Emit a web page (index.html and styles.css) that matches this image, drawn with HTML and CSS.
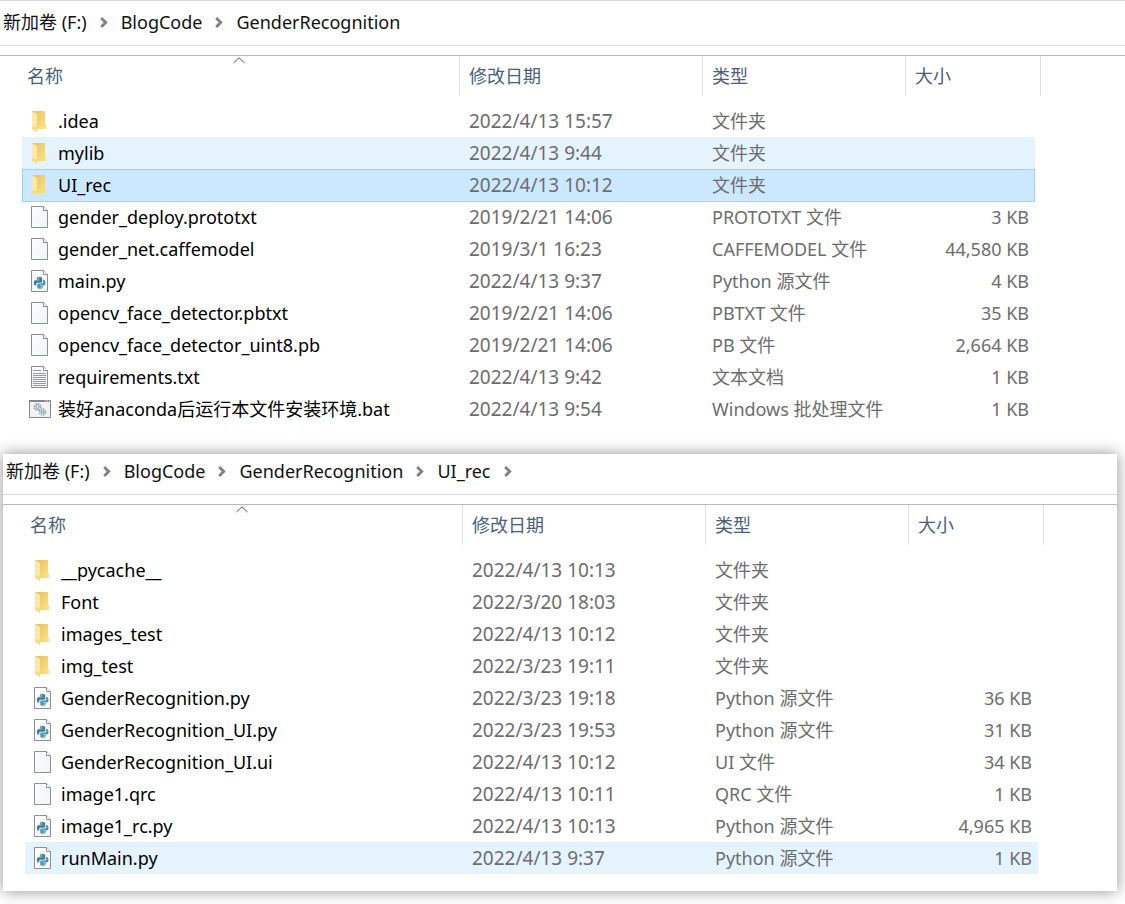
FILE: index.html
```
<!DOCTYPE html>
<html lang="zh-CN">
<head>
<meta charset="utf-8">
<title>GenderRecognition</title>
<link rel="stylesheet" href="styles.css">
</head>
<body>
<svg class="sprite" aria-hidden="true">
  <defs>
    <linearGradient id="gold" x1="0" y1="0" x2="1" y2="1">
      <stop offset="0" stop-color="#e9c25a"/><stop offset="1" stop-color="#ffe08a"/>
    </linearGradient>
    <linearGradient id="paper" x1="0" y1="0" x2="1" y2="1">
      <stop offset="0" stop-color="#fdfdfe"/><stop offset="1" stop-color="#f1f4f6"/>
    </linearGradient>
    <symbol id="folder" viewBox="0 0 24 24">
      <path d="M4 2H17V15L18 16V20H8V18H4Z" fill="url(#gold)"/>
      <path d="M4 2L9 5V23L4 20Z" fill="#ffe9a6"/>
      <path d="M4 17L9 18V23L4 20Z" fill="#fbdc80"/>
    </symbol>
    <symbol id="doc" viewBox="0 0 24 24">
      <path d="M3.500 1.500H15.500L19.500 5.500V22.500H3.500Z" fill="url(#paper)" stroke="#8f8f8f"/>
      <path d="M15.500 1.500V5.500H19.500" fill="#fff" stroke="#8f8f8f"/>
    </symbol>
    <symbol id="python" viewBox="0 0 24 24">
      <use href="#doc"/>
      <g transform="translate(0 .8)">
      <path d="M8.800 8.500Q8.800 7.200 11.500 7.200T14.200 8.500V11.500Q14.200 13 12.500 13H9.500Q8.200 13 8.200 14.200V15.700H7.300Q5.800 15.700 5.800 13T7.300 10.400H11.500V10H8.800Z" fill="#3d7f9e"/>
      <path d="M15 10.300H16Q17.500 10.300 17.500 13T16 15.700H12V16.100H14.700V17.600Q14.700 18.900 12 18.900T9.200 17.600V14.900Q9.200 13.700 10.600 13.700H13.600Q15 13.700 15 12.400Z" fill="#5196b3"/>
      <circle cx="10.300" cy="8.700" r=".5" fill="#fff"/><circle cx="13.200" cy="17.400" r=".5" fill="#fff"/>
      </g>
    </symbol>
    <symbol id="text" viewBox="0 0 24 24">
      <use href="#doc"/>
      <path d="M5 5.500H13M5 8.500H18M5 10.500H18M5 12.500H18M5 14.500H18M5 16.500H18M5 18.500H18M5 20.500H18" stroke="#999"/>
    </symbol>
    <symbol id="batch" viewBox="0 0 24 24">
      <path d="M1.500 3.500H22.500V20.500H1.500Z" fill="#f3f3f3" stroke="#858585"/>
      <path d="M1 3H23V5H1Z" fill="#858585"/>
      <path d="M17 4H18M19 4H20M21 4H22" stroke="#eee"/>
      <circle cx="9.500" cy="10" r="3.200" fill="#e4e9ed" stroke="#91a0ac" stroke-width="1.800" stroke-dasharray="1.500 1"/>
      <circle cx="9.500" cy="10" r="1.500" fill="#fff" stroke="#8796a2"/>
      <circle cx="14.500" cy="15" r="3" fill="#d6e4ee" stroke="#91a8b8" stroke-width="1.600" stroke-dasharray="1.400 1"/>
      <circle cx="14.500" cy="15" r="1.300" fill="#fff" stroke="#8796a2"/>
    </symbol>
    <symbol id="chevron" viewBox="0 0 8 12">
      <path d="M1.200 2L5.700 6.500L1.200 11" fill="none" stroke="#808080" stroke-width="2.800"/>
    </symbol>
    <symbol id="sort" viewBox="0 0 12 7">
      <path d="M.5 6L6 .8L11.500 6" fill="none" stroke="#555"/>
    </symbol>
  </defs>
</svg>

<main>
<section class="pane pane-main">
  <nav class="crumbs" aria-label="路径">
    <a href="#">新加卷 (F:)</a><svg class="chevron"><use href="#chevron"/></svg>
    <a href="#">BlogCode</a><svg class="chevron"><use href="#chevron"/></svg>
    <a href="#">GenderRecognition</a>
  </nav>
  <div class="listing">
    <table class="files">
      <colgroup><col><col class="col-date"><col class="col-type"><col class="col-size"><col class="col-tail"></colgroup>
      <thead><tr>
        <th><button class="head head-name">名称<svg class="sort"><use href="#sort"/></svg></button></th>
        <th><button class="head">修改日期</button></th>
        <th><button class="head">类型</button></th>
        <th colspan="2"><button class="head">大小</button></th>
      </tr></thead>
      <tbody>
        <tr><td><div class="name"><svg class="icon"><use href="#folder"/></svg>.idea</div></td><td class="date">2022/4/13 15:57</td><td>文件夹</td><td></td></tr>
        <tr class="hover"><td><div class="name"><svg class="icon"><use href="#folder"/></svg>mylib</div></td><td class="date">2022/4/13 9:44</td><td>文件夹</td><td></td></tr>
        <tr class="selected"><td><div class="name"><svg class="icon"><use href="#folder"/></svg>UI_rec</div></td><td class="date">2022/4/13 10:12</td><td>文件夹</td><td></td></tr>
        <tr><td><div class="name"><svg class="icon"><use href="#doc"/></svg>gender_deploy.prototxt</div></td><td class="date">2019/2/21 14:06</td><td>PROTOTXT 文件</td><td>3 KB</td></tr>
        <tr><td><div class="name"><svg class="icon"><use href="#doc"/></svg>gender_net.caffemodel</div></td><td class="date">2019/3/1 16:23</td><td>CAFFEMODEL 文件</td><td>44,580 KB</td></tr>
        <tr><td><div class="name"><svg class="icon"><use href="#python"/></svg>main.py</div></td><td class="date">2022/4/13 9:37</td><td>Python 源文件</td><td>4 KB</td></tr>
        <tr><td><div class="name"><svg class="icon"><use href="#doc"/></svg>opencv_face_detector.pbtxt</div></td><td class="date">2019/2/21 14:06</td><td>PBTXT 文件</td><td>35 KB</td></tr>
        <tr><td><div class="name"><svg class="icon"><use href="#doc"/></svg>opencv_face_detector_uint8.pb</div></td><td class="date">2019/2/21 14:06</td><td>PB 文件</td><td>2,664 KB</td></tr>
        <tr><td><div class="name"><svg class="icon"><use href="#text"/></svg>requirements.txt</div></td><td class="date">2022/4/13 9:42</td><td>文本文档</td><td>1 KB</td></tr>
        <tr><td><div class="name"><svg class="icon"><use href="#batch"/></svg>装好anaconda后运行本文件安装环境.bat</div></td><td class="date">2022/4/13 9:54</td><td>Windows 批处理文件</td><td>1 KB</td></tr>
      </tbody>
    </table>
  </div>
</section>

<section class="pane pane-raised">
  <nav class="crumbs" aria-label="路径">
    <a href="#">新加卷 (F:)</a><svg class="chevron"><use href="#chevron"/></svg>
    <a href="#">BlogCode</a><svg class="chevron"><use href="#chevron"/></svg>
    <a href="#">GenderRecognition</a><svg class="chevron"><use href="#chevron"/></svg>
    <a href="#">UI_rec</a><svg class="chevron"><use href="#chevron"/></svg>
  </nav>
  <div class="listing">
    <table class="files">
      <colgroup><col><col class="col-date"><col class="col-type"><col class="col-size"><col class="col-tail"></colgroup>
      <thead><tr>
        <th><button class="head head-name">名称<svg class="sort"><use href="#sort"/></svg></button></th>
        <th><button class="head">修改日期</button></th>
        <th><button class="head">类型</button></th>
        <th colspan="2"><button class="head">大小</button></th>
      </tr></thead>
      <tbody>
        <tr><td><div class="name"><svg class="icon"><use href="#folder"/></svg>__pycache__</div></td><td class="date">2022/4/13 10:13</td><td>文件夹</td><td></td></tr>
        <tr><td><div class="name"><svg class="icon"><use href="#folder"/></svg>Font</div></td><td class="date">2022/3/20 18:03</td><td>文件夹</td><td></td></tr>
        <tr><td><div class="name"><svg class="icon"><use href="#folder"/></svg>images_test</div></td><td class="date">2022/4/13 10:12</td><td>文件夹</td><td></td></tr>
        <tr><td><div class="name"><svg class="icon"><use href="#folder"/></svg>img_test</div></td><td class="date">2022/3/23 19:11</td><td>文件夹</td><td></td></tr>
        <tr><td><div class="name"><svg class="icon"><use href="#python"/></svg>GenderRecognition.py</div></td><td class="date">2022/3/23 19:18</td><td>Python 源文件</td><td>36 KB</td></tr>
        <tr><td><div class="name"><svg class="icon"><use href="#python"/></svg>GenderRecognition_UI.py</div></td><td class="date">2022/3/23 19:53</td><td>Python 源文件</td><td>31 KB</td></tr>
        <tr><td><div class="name"><svg class="icon"><use href="#doc"/></svg>GenderRecognition_UI.ui</div></td><td class="date">2022/4/13 10:12</td><td>UI 文件</td><td>34 KB</td></tr>
        <tr><td><div class="name"><svg class="icon"><use href="#doc"/></svg>image1.qrc</div></td><td class="date">2022/4/13 10:11</td><td>QRC 文件</td><td>1 KB</td></tr>
        <tr><td><div class="name"><svg class="icon"><use href="#python"/></svg>image1_rc.py</div></td><td class="date">2022/4/13 10:13</td><td>Python 源文件</td><td>4,965 KB</td></tr>
        <tr class="hover"><td><div class="name"><svg class="icon"><use href="#python"/></svg>runMain.py</div></td><td class="date">2022/4/13 9:37</td><td>Python 源文件</td><td>1 KB</td></tr>
      </tbody>
    </table>
  </div>
</section>
</main>
</body>
</html>
```
FILE: styles.css
```
* { box-sizing: border-box; }

body {
  margin: 0;
  background: #fff;
  color: #000;
  font: 18px/32px "Noto Sans", "Noto Sans CJK SC", sans-serif;
}

.sprite { position: absolute; width: 0; height: 0; }

.pane { background: #fff; }
.pane-main { border-top: 1px solid #d9d9d9; }
.pane-main .crumbs { padding-top: 4px; }
.pane-main .listing { padding-right: 84px; }
.pane-raised {
  margin: 29px 8px 13px 3px;
  padding-bottom: 17px;
  box-shadow: 0 0 14px rgba(0, 0, 0, .45);
}
.pane-raised .listing { padding-right: 73px; }

.crumbs {
  display: flex;
  align-items: center;
  gap: 13px;
  padding: 0 3px 6px;
  line-height: 34px;
  border-bottom: 1px solid #d9d9d9;
}
.crumbs a { color: #111; text-decoration: none; white-space: nowrap; }
.chevron { width: 8px; height: 12px; flex: none; }

.listing {
  margin-top: 9px;
  padding-left: 22px;
  border-top: 1px solid #b9b9b9;
}

.files {
  width: 100%;
  table-layout: fixed;
  border-collapse: separate;
  border-spacing: 0;
}
.col-date { width: 243px; }
.col-type { width: 203px; }
.col-size { width: 129px; }
.col-tail { width: 6px; }

.files th {
  height: 49px;
  padding: 0;
  font-weight: 400;
  vertical-align: top;
}
.head {
  position: relative;
  display: block;
  width: 100%;
  height: 40px;
  padding: 0 9px;
  border: 0;
  border-right: 1px solid #e2e2e2;
  background: none;
  color: #4c607a;
  font: inherit;
  text-align: left;
}
.head-name { padding-left: 5px; }
.sort {
  position: absolute;
  top: 1px;
  left: calc(50% - 8px);
  width: 12px;
  height: 7px;
}

.files td {
  height: 32px;
  padding: 0 9px;
  color: #6d6d6d;
  white-space: nowrap;
}
.files .date { font-size: 19px; }
.files td:first-child { padding: 0 6px; color: #000; }
.files td:last-child { padding: 0 6px; text-align: right; }
.name { display: flex; align-items: center; gap: 6px; }
.icon { width: 24px; height: 24px; flex: none; }

.hover td { background: #e5f3ff; }
.selected td {
  background: #cce8ff;
  box-shadow: inset 0 1px #99d1ff, 0 1px #99d1ff;
}
.selected td:first-child { box-shadow: inset 1px 1px #99d1ff, 0 1px #99d1ff; }
.selected td:last-child { box-shadow: inset -1px 1px #99d1ff, 0 1px #99d1ff; }
```
